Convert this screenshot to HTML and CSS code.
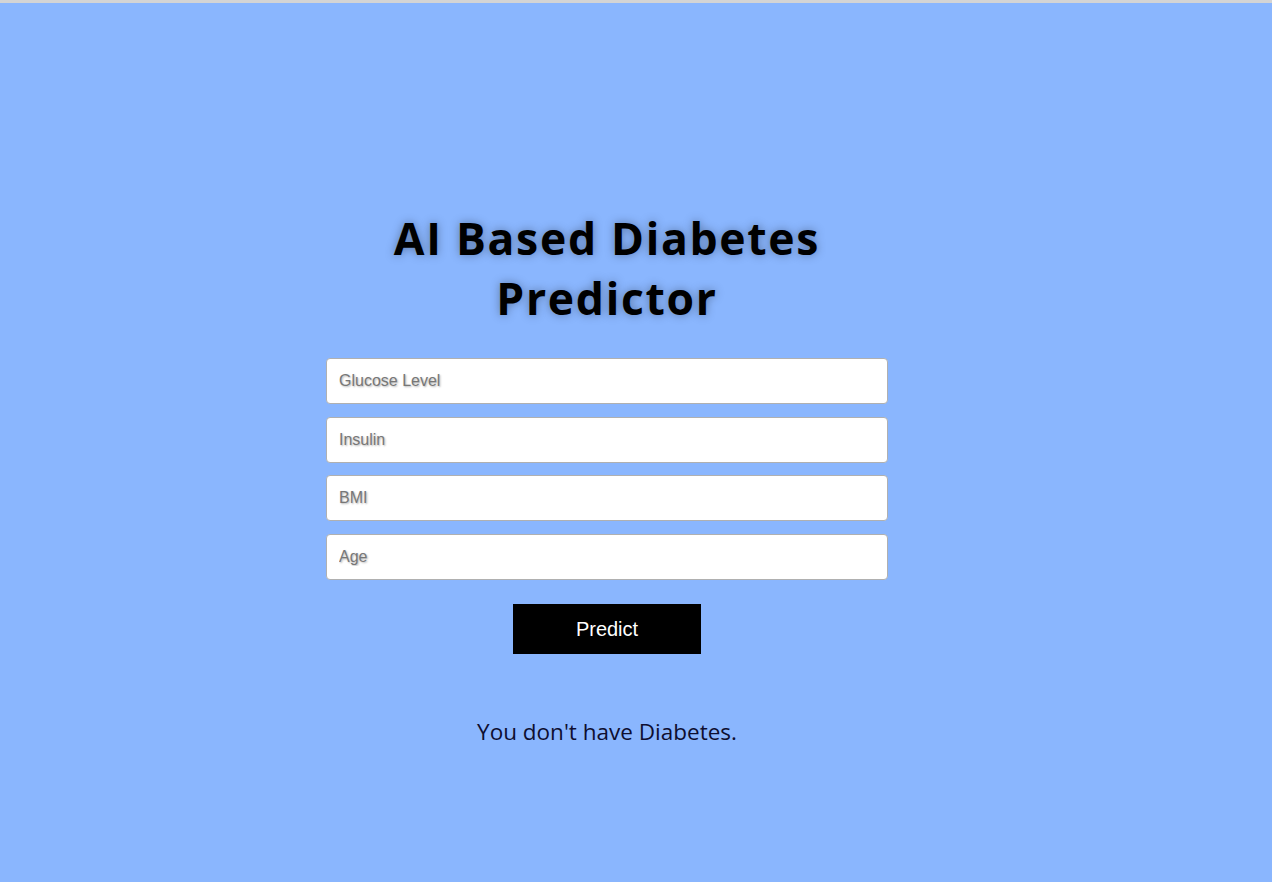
FILE: index.html
```html
<!DOCTYPE html>
<html lang="en">
<head>
<meta charset="utf-8">
<title>AI Based Diabetes Predictor</title>
<link rel="stylesheet" href="styles.css">
</head>
<body>
<div class="topline"></div>
<main class="page">
  <div class="card">
    <h1 class="title">AI Based Diabetes Predictor</h1>
    <form class="form">
      <input class="field" type="text" placeholder="Glucose Level">
      <input class="field" type="text" placeholder="Insulin">
      <input class="field" type="text" placeholder="BMI">
      <input class="field" type="text" placeholder="Age">
      <button class="btn" type="button">Predict</button>
    </form>
    <p class="result">You don't have Diabetes.</p>
  </div>
</main>
</body>
</html>
```
FILE: styles.css
```css
html, body {
  margin: 0;
  padding: 0;
  height: 100%;
}
body {
  background: #8ab6fe;
  font-family: "Open Sans", "Liberation Sans", sans-serif;
}
.topline {
  height: 3px;
  background: #d4d4d4;
}
.page {
  display: flex;
  justify-content: center;
  padding-top: 205px;
  padding-right: 58px;
}
.card {
  width: 562px;
  display: flex;
  flex-direction: column;
  align-items: center;
}
.title {
  margin: 0 0 30px;
  font-size: 44.5px;
  line-height: 60px;
  font-weight: 700;
  letter-spacing: 1.7px;
  text-align: center;
  color: #000;
  width: 470px;
  text-shadow: 0 0 10px rgba(0, 0, 0, 0.35);
}
.form {
  width: 100%;
  display: flex;
  flex-direction: column;
  align-items: center;
  gap: 12.5px;
}
.field {
  box-sizing: border-box;
  width: 100%;
  height: 46px;
  padding: 0 12px;
  border: 1px solid #b0b0b0;
  border-radius: 4px;
  background: #fff;
  font-family: "Liberation Sans", Arial, sans-serif;
  font-size: 16px;
  outline: none;
}
.field::placeholder {
  color: #777;
  text-shadow: 1px 1px 2px rgba(0, 0, 0, 0.3);
}
.btn {
  margin-top: 12px;
  width: 188px;
  height: 50px;
  border: none;
  background: #000;
  color: #fff;
  font-family: "Liberation Sans", Arial, sans-serif;
  font-size: 20px;
  cursor: pointer;
}
.result {
  margin: 62px 0 0;
  font-size: 22.5px;
  color: #0e0e30;
}
```
